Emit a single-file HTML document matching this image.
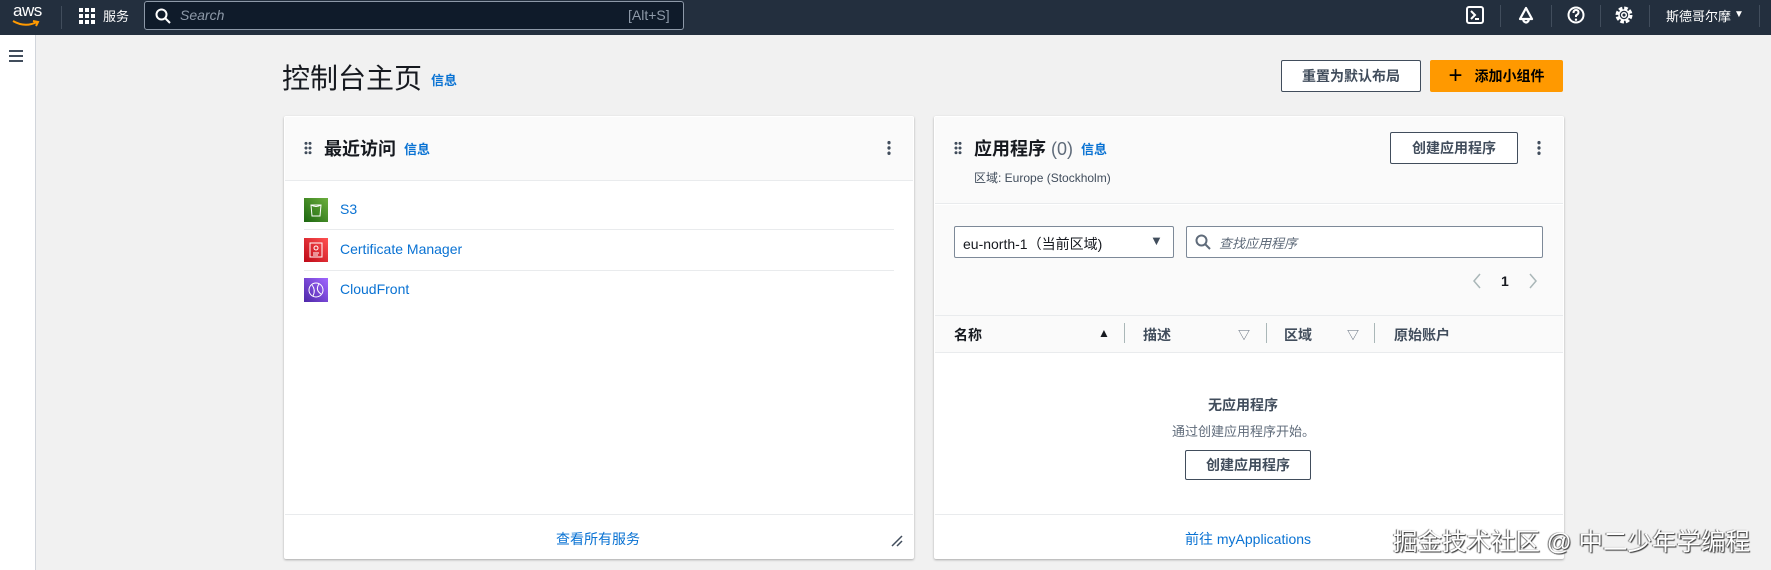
<!DOCTYPE html>
<html><head><meta charset="utf-8"><style>
*{box-sizing:border-box;margin:0;padding:0}
body{width:1771px;height:570px;overflow:hidden;background:#f1f1f1;font-family:"Liberation Sans","Noto Sans CJK SC",sans-serif;position:relative;color:#16191f}
.a{position:absolute}
.nav{left:0;top:0;width:1771px;height:35px;background:#232f3e}
.w{color:#fff}
.link{color:#0972d3}
.panel{background:#fff;border-radius:2px;box-shadow:0 1px 2px rgba(0,0,0,.3)}
.btn{border:1px solid #414d5c;border-radius:2px;background:#fff;font-size:14px;font-weight:bold;color:#414d5c;display:flex;align-items:center;justify-content:center}
.dots{width:8px;height:14px;background:radial-gradient(circle,#414d5c 1.4px,transparent 1.6px) 0 0/4px 4.7px}
.keb{width:4px;height:16px;background:radial-gradient(circle,#414d5c 1.6px,transparent 1.8px) 0 0/4px 5.3px}
.hr{height:1px;background:#e9ebed}
.vd{width:1px;height:20px;background:#aab7b8}
</style></head><body>
<div class="a nav"></div>
<div class="a w" style="left:13px;top:1px;font-size:17px;letter-spacing:-0.5px">aws</div>
<svg class="a" style="left:12px;top:20px" width="28" height="8"><path d="M1 1 Q13 8 25 2 M21 1 L26 2 L24 6" stroke="#f90" stroke-width="2" fill="none"/></svg>
<div class="a" style="left:61px;top:6px;width:1px;height:23px;background:#414d5c"></div>
<svg class="a" style="left:79px;top:8px" width="16" height="16"><g fill="#fff"><rect x="0" y="0" width="4" height="4"/><rect x="6" y="0" width="4" height="4"/><rect x="12" y="0" width="4" height="4"/><rect x="0" y="6" width="4" height="4"/><rect x="6" y="6" width="4" height="4"/><rect x="12" y="6" width="4" height="4"/><rect x="0" y="12" width="4" height="4"/><rect x="6" y="12" width="4" height="4"/><rect x="12" y="12" width="4" height="4"/></g></svg>
<div class="a w" style="left:103px;top:6px;font-size:13px">服务</div>
<div class="a" style="left:144px;top:1px;width:540px;height:29px;border:1px solid #8d99a8;border-radius:3px;background:#0f1b2a"></div>
<svg class="a" style="left:155px;top:8px" width="16" height="16"><circle cx="6.5" cy="6.5" r="5" stroke="#fff" stroke-width="2" fill="none"/><path d="M10 10 L15 15" stroke="#fff" stroke-width="2"/></svg>
<div class="a" style="left:180px;top:7px;font-size:14px;font-style:italic;color:#8d99a8">Search</div>
<div class="a" style="left:628px;top:7px;font-size:14px;color:#8d99a8">[Alt+S]</div>
<svg class="a" style="left:1466px;top:6px" width="18" height="18"><rect x="1" y="1" width="16" height="16" rx="2" stroke="#fff" stroke-width="2" fill="none"/><path d="M5 5 L9 9 L5 13 M9 13 H13" stroke="#fff" stroke-width="2" fill="none"/></svg>
<div class="a" style="left:1500px;top:5px;width:1px;height:22px;background:#414d5c"></div>
<svg class="a" style="left:1516px;top:6px" width="20" height="20"><path d="M10 2 L16 13 H4 Z M7 14 Q10 19 13 14" fill="none" stroke="#fff" stroke-width="2.2" stroke-linejoin="round"/></svg>
<div class="a" style="left:1551px;top:5px;width:1px;height:22px;background:#414d5c"></div>
<svg class="a" style="left:1566px;top:5px" width="20" height="20"><circle cx="10" cy="10" r="7.5" stroke="#fff" stroke-width="2" fill="none"/><path d="M7.5 8 Q7.5 5 10 5 Q12.5 5 12.5 7.5 Q12.5 9 10 10.5 V12" stroke="#fff" stroke-width="2" fill="none"/><circle cx="10" cy="14.7" r="1.2" fill="#fff"/></svg>
<div class="a" style="left:1600px;top:5px;width:1px;height:22px;background:#414d5c"></div>
<svg class="a" style="left:1614px;top:5px" width="20" height="20"><circle cx="10" cy="10" r="6.5" stroke="#fff" stroke-width="4" fill="none" stroke-dasharray="3.4 1.7"/><circle cx="10" cy="10" r="5" stroke="#fff" stroke-width="1.5" fill="none"/><circle cx="10" cy="10" r="2.3" stroke="#fff" stroke-width="1.5" fill="none"/></svg>
<div class="a" style="left:1649px;top:5px;width:1px;height:22px;background:#414d5c"></div>
<div class="a w" style="left:1666px;top:6px;font-size:13px">斯德哥尔摩</div>
<div class="a w" style="left:1734px;top:9px;font-size:10px">▼</div>
<div class="a" style="left:1759px;top:5px;width:1px;height:22px;background:#414d5c"></div>

<div class="a" style="left:0;top:35px;width:36px;height:535px;background:#fff;border-right:1px solid #d1d5db"></div>
<svg class="a" style="left:8px;top:49px" width="16" height="14"><path d="M1 2H15M1 7H15M1 12H15" stroke="#414d5c" stroke-width="2"/></svg>

<div class="a" style="left:282px;top:57px;font-size:28px">控制台主页</div>
<div class="a link" style="left:431px;top:70px;font-size:13px;font-weight:bold">信息</div>
<div class="a btn" style="left:1281px;top:60px;width:140px;height:32px">重置为默认布局</div>
<div class="a btn" style="left:1430px;top:60px;width:133px;height:32px;background:#ff9900;border-color:#ff9900;color:#000"><span style="font-size:24px;font-weight:normal;margin-right:12px;line-height:20px">+</span>添加小组件</div>

<div class="a panel" style="left:284px;top:116px;width:630px;height:443px"></div>
<div class="a" style="left:285px;top:117px;width:628px;height:64px;background:#fafafa;border-bottom:1px solid #e9ebed"></div>
<div class="a dots" style="left:304px;top:141px"></div>
<div class="a" style="left:324px;top:135px;font-size:18px;font-weight:bold">最近访问</div>
<div class="a link" style="left:404px;top:139px;font-size:13px;font-weight:bold">信息</div>
<div class="a keb" style="left:887px;top:140px"></div>
<div class="a" style="left:304px;top:198px;width:24px;height:24px;background:linear-gradient(45deg,#1b660f,#6cae3e)"></div>
<svg class="a" style="left:304px;top:198px" width="24" height="24"><path d="M7 7 H17 L16 18 H8 Z M7 7 Q12 10 17 7" stroke="#fff" fill="none" stroke-width="1"/></svg>
<div class="a link" style="left:340px;top:201px;font-size:14px">S3</div>
<div class="a hr" style="left:304px;top:229px;width:590px"></div>
<div class="a" style="left:304px;top:238px;width:24px;height:24px;background:linear-gradient(45deg,#bd0816,#ff5252)"></div>
<svg class="a" style="left:304px;top:238px" width="24" height="24"><rect x="6" y="5" width="12" height="14" stroke="#fff" fill="none"/><path d="M9 15H15M9 17H14" stroke="#fff"/><circle cx="12" cy="10" r="2" stroke="#fff" fill="none"/></svg>
<div class="a link" style="left:340px;top:241px;font-size:14px">Certificate Manager</div>
<div class="a hr" style="left:304px;top:270px;width:590px"></div>
<div class="a" style="left:304px;top:278px;width:24px;height:24px;background:linear-gradient(45deg,#4d27a8,#a166ff)"></div>
<svg class="a" style="left:304px;top:278px" width="24" height="24"><circle cx="12" cy="12" r="7" stroke="#fff" fill="none"/><path d="M8 7 Q12 12 9 18 M15 6 Q11 12 17 16" stroke="#fff" fill="none"/></svg>
<div class="a link" style="left:340px;top:281px;font-size:14px">CloudFront</div>
<div class="a hr" style="left:285px;top:514px;width:628px"></div>
<div class="a link" style="left:556px;top:529px;font-size:14px">查看所有服务</div>
<svg class="a" style="left:891px;top:535px" width="12" height="12"><path d="M1 11 L11 1 M6 11 L11 6" stroke="#414d5c" stroke-width="1.5"/></svg>

<div class="a panel" style="left:934px;top:116px;width:630px;height:443px"></div>
<div class="a" style="left:935px;top:117px;width:628px;height:87px;background:#fafafa;border-bottom:1px solid #e9ebed"></div>
<div class="a dots" style="left:954px;top:141px"></div>
<div class="a" style="left:974px;top:135px;font-size:18px;font-weight:bold">应用程序 <span style="font-weight:normal;color:#5f6b7a">(0)</span></div>
<div class="a link" style="left:1081px;top:139px;font-size:13px;font-weight:bold">信息</div>
<div class="a" style="left:974px;top:169px;font-size:12px;color:#414d5c">区域: Europe (Stockholm)</div>
<div class="a btn" style="left:1390px;top:132px;width:128px;height:32px">创建应用程序</div>
<div class="a keb" style="left:1537px;top:140px"></div>
<div class="a" style="left:935px;top:205px;width:628px;height:147px;background:#fafafa"></div>
<div class="a" style="left:954px;top:226px;width:220px;height:32px;border:1px solid #7d8998;border-radius:2px;background:#fff;font-size:14px;padding:7px 8px">eu-north-1（当前区域)</div>
<div class="a" style="left:1150px;top:233px;font-size:13px;color:#414d5c">▼</div>
<div class="a" style="left:1186px;top:226px;width:357px;height:32px;border:1px solid #7d8998;border-radius:2px;background:#fff"></div>
<svg class="a" style="left:1195px;top:234px" width="16" height="16"><circle cx="6.5" cy="6.5" r="5" stroke="#5f6b7a" stroke-width="2" fill="none"/><path d="M10 10 L15 15" stroke="#5f6b7a" stroke-width="2"/></svg>
<div class="a" style="left:1219px;top:233px;font-size:13px;font-style:italic;color:#5f6b7a">查找应用程序</div>
<svg class="a" style="left:1472px;top:272px" width="10" height="18"><path d="M8 2 L2 9 L8 16" stroke="#aab7b8" stroke-width="1.5" fill="none"/></svg>
<div class="a" style="left:1501px;top:273px;font-size:14px;font-weight:bold">1</div>
<svg class="a" style="left:1528px;top:272px" width="10" height="18"><path d="M2 2 L8 9 L2 16" stroke="#aab7b8" stroke-width="1.5" fill="none"/></svg>
<div class="a hr" style="left:935px;top:315px;width:628px"></div>
<div class="a" style="left:954px;top:325px;font-size:14px;font-weight:bold">名称</div>
<div class="a" style="left:1098px;top:326px;font-size:12px">▲</div>
<div class="a vd" style="left:1124px;top:323px"></div>
<div class="a" style="left:1143px;top:325px;font-size:14px;font-weight:bold;color:#414d5c">描述</div>
<div class="a" style="left:1238px;top:326px;font-size:12px;color:#5f6b7a">▽</div>
<div class="a vd" style="left:1266px;top:323px"></div>
<div class="a" style="left:1284px;top:325px;font-size:14px;font-weight:bold;color:#414d5c">区域</div>
<div class="a" style="left:1347px;top:326px;font-size:12px;color:#5f6b7a">▽</div>
<div class="a vd" style="left:1374px;top:323px"></div>
<div class="a" style="left:1394px;top:325px;font-size:14px;font-weight:bold;color:#414d5c">原始账户</div>
<div class="a hr" style="left:935px;top:352px;width:628px"></div>
<div class="a" style="left:1208px;top:395px;font-size:14px;font-weight:bold;color:#414d5c">无应用程序</div>
<div class="a" style="left:1172px;top:421px;font-size:13px;color:#5f6b7a">通过创建应用程序开始。</div>
<div class="a btn" style="left:1185px;top:450px;width:126px;height:30px">创建应用程序</div>
<div class="a hr" style="left:935px;top:514px;width:628px"></div>
<div class="a link" style="left:1185px;top:529px;font-size:14px">前往 myApplications</div>
<div class="a" style="left:1393px;top:523px;font-size:24.5px;color:#fff;text-shadow:1px 1px 1px #333,-1px 0 1px #666;white-space:nowrap">掘金技术社区 @ 中二少年学编程</div>
</body></html>
